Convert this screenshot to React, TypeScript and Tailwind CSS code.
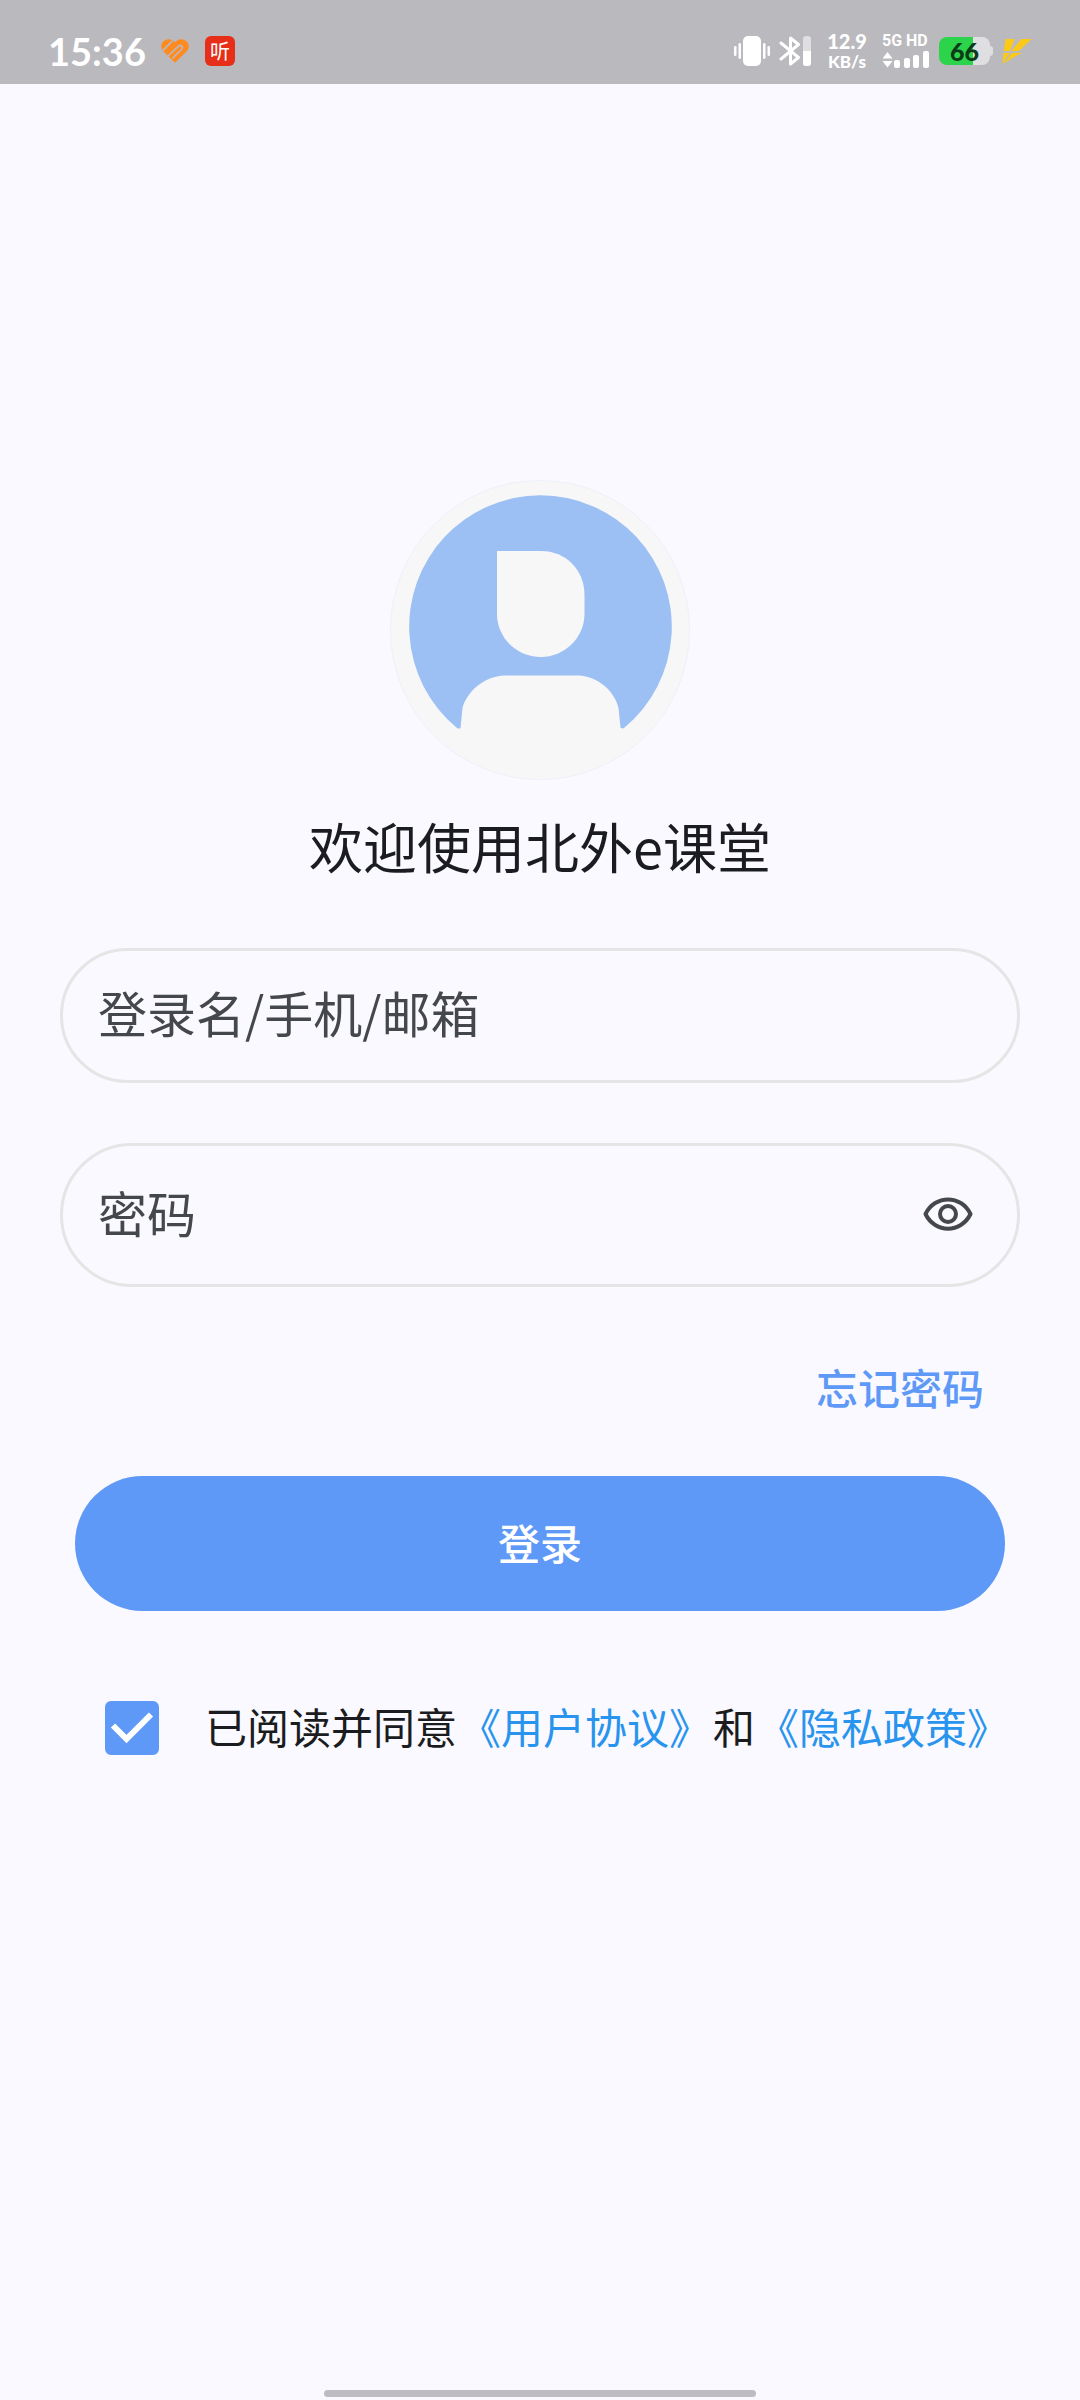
import { useState } from "react";

function HeartIcon() {
  return (
    <svg viewBox="0 0 84 72" className="h-6 w-7" aria-hidden="true">
      <defs>
        <clipPath id="heart">
          <path d="M42 71 L6 36 C-3 25 0 9 13 3 C24 -2 35 2 42 10 C49 2 60 -2 71 3 C84 9 87 25 78 36 Z" />
        </clipPath>
      </defs>
      <g clipPath="url(#heart)">
        <rect width="84" height="72" fill="#ff8a1f" />
        <path d="M0 40 L38 2" stroke="#bab9be" strokeWidth="5" />
        <path d="M18 54 L52 22 Q60 16 64 23 Q66 28 60 33 L34 58" stroke="#bab9be" strokeWidth="5" fill="none" />
      </g>
    </svg>
  );
}

function VibrateIcon() {
  return (
    <svg viewBox="0 0 36 30" className="h-[30px] w-9" fill="#fff" aria-hidden="true">
      <rect x="9" width="18" height="30" rx="5" />
      <rect y="10" width="2.5" height="10" rx="1.2" />
      <rect x="4.5" y="7" width="2.5" height="16" rx="1.2" />
      <rect x="29" y="7" width="2.5" height="16" rx="1.2" />
      <rect x="33.5" y="10" width="2.5" height="10" rx="1.2" />
    </svg>
  );
}

function BluetoothIcon() {
  return (
    <svg viewBox="0 0 33 30" className="h-[30px] w-[33px]" aria-hidden="true">
      <path d="M2 7 L19.5 21.5 L11.5 28 V2 L19.5 8.5 L2 23" fill="none" stroke="#fff" strokeWidth="3" strokeLinecap="round" strokeLinejoin="round" />
      <rect x="24" width="8" height="30" rx="3" fill="#dfdfe2" />
      <path d="M24 15 H32 V27 Q32 30 29 30 H27 Q24 30 24 27 Z" fill="#fff" />
    </svg>
  );
}

function SignalIcon() {
  return (
    <svg viewBox="0 0 47 17" className="h-[17px] w-[47px]" fill="#fff" aria-hidden="true">
      <path d="M5.5 1 L10.5 7.5 H0.5 Z M5.5 16.5 L0.5 10 H10.5 Z" />
      <rect x="12" y="9" width="6" height="8" rx="2" />
      <rect x="22" y="7" width="6" height="10" rx="2" />
      <rect x="31" y="4" width="6" height="13" rx="2" />
      <rect x="41" y="0" width="6" height="17" rx="2" />
    </svg>
  );
}

function BoltIcon() {
  return (
    <svg viewBox="0 0 90 75" className="h-[25px] w-[30px]" fill="#fbc916" aria-hidden="true">
      <path d="M11 0 H38 L24 36 H5 Z" />
      <path d="M58 0 H89 L50 36 H28 Z" />
      <path d="M4 42 H24 L12 58 L2 75 Z" />
      <path d="M30 42 H60 L36 54 L4 75 Z" />
    </svg>
  );
}

function StatusBar() {
  return (
    <header className="flex h-[84px] items-center justify-between bg-[#bab9be] px-12 pt-[18px] font-['Lato','Noto_Sans_CJK_SC',sans-serif] text-white">
      <div className="flex items-center">
        <span className="text-[38px] font-bold leading-none">15:36</span>
        <span className="ml-[15px]">
          <HeartIcon />
        </span>
        <span className="ml-4 flex h-[30px] w-[30px] items-center justify-center rounded-md bg-[#e62e19] text-[20px] leading-none">
          听
        </span>
      </div>
      <div className="flex items-center">
        <VibrateIcon />
        <span className="ml-[9px]">
          <BluetoothIcon />
        </span>
        <span className="ml-[13px] flex w-11 flex-col items-center font-black">
          <span className="text-[20px] leading-[22px]">12.9</span>
          <span className="text-[17px] leading-[20px]">KB/s</span>
        </span>
        <span className="ml-[13px] flex flex-col gap-[3px]">
          <span className="whitespace-nowrap font-['Roboto',sans-serif] text-[16px] font-bold leading-[14px]">5G HD</span>
          <SignalIcon />
        </span>
        <span className="ml-[10px] flex items-center">
          <span className="flex h-7 w-[51px] items-center justify-center rounded-lg bg-[linear-gradient(90deg,#2bd44a_66%,#dfdfe2_66%)] text-[25px] font-black leading-none text-[#0d3b17]">
            66
          </span>
          <span className="h-[10px] w-[3px] rounded-r-sm bg-[#dfdfe2]" />
        </span>
        <span className="ml-[9px]">
          <BoltIcon />
        </span>
      </div>
    </header>
  );
}

function Avatar() {
  return (
    <svg viewBox="0 0 300 300" className="h-[300px] w-[300px]" role="img" aria-label="头像">
      <circle cx="150" cy="150" r="149.5" fill="#f7f7f7" stroke="#edf1f9" />
      <path
        d="M67 248 A131.3 131.3 0 1 1 234 248 Q232 249 230.5 247.5 L228.5 228 C225 212 209 197 190 195.5 H113 C93 197 77 212 72.5 228 L70.5 248 Q69 249 67 248 Z"
        fill="#9cbff4"
      />
      <path d="M107 71 H151 C176 71 194.5 90 194.5 115 V134 C194.5 158 174 177 151 177 C127 177 107 158 107 134 Z" fill="#f7f7f7" />
    </svg>
  );
}

function EyeIcon() {
  return (
    <svg viewBox="0 0 50 34" className="h-[34px] w-[50px]" fill="none" stroke="#44474c" strokeWidth="4" aria-hidden="true">
      <path d="M2.5 17 C12 -2.5 38 -2.5 47.5 17 C38 36.5 12 36.5 2.5 17 Z" strokeLinejoin="round" />
      <circle cx="25" cy="17" r="8" />
    </svg>
  );
}

export default function App() {
  const [visible, setVisible] = useState(false);
  const [agreed, setAgreed] = useState(true);

  return (
    <div className="flex min-h-screen flex-col bg-[#faf9ff] font-['Noto_Sans_CJK_SC',sans-serif] text-[#1a1c20]">
      <StatusBar />
      <main className="flex flex-1 flex-col items-center px-[60px] pt-[396px]">
        <Avatar />
        <h1 className="mt-[26px] text-[54px] leading-[80px]">欢迎使用北外e课堂</h1>
        <form className="mt-[62px] flex w-full flex-col" onSubmit={(e) => e.preventDefault()}>
          <input
            type="text"
            aria-label="登录名/手机/邮箱"
            placeholder="登录名/手机/邮箱"
            className="h-[135px] w-full rounded-full border-[3px] border-[#e5e5e5] bg-transparent px-[35px] pb-2 text-[49px] outline-none placeholder:text-[#44474c]"
          />
          <div className="mt-[60px] flex h-36 w-full items-center rounded-full border-[3px] border-[#e5e5e5] pl-[35px] pr-11">
            <input
              type={visible ? "text" : "password"}
              aria-label="密码"
              placeholder="密码"
              className="h-full min-w-0 flex-1 bg-transparent pb-2 text-[49px] outline-none placeholder:text-[#44474c]"
            />
            <button type="button" aria-label="显示密码" className="pb-[3px]" onClick={() => setVisible(!visible)}>
              <EyeIcon />
            </button>
          </div>
          <a href="#forgot" className="mr-9 mt-[70px] self-end text-[42px] font-medium leading-[60px] text-[#5f99f7]">
            忘记密码
          </a>
          <button type="submit" className="mx-[15px] mt-[59px] h-[135px] rounded-full bg-[#5f99f7] pb-1 text-[42px] font-medium text-white">
            登录
          </button>
          <div className="mt-[87px] flex items-center pl-[45px]">
            <span className="relative flex h-[54px] w-[54px] shrink-0">
              <input
                id="agree"
                type="checkbox"
                checked={agreed}
                onChange={(e) => setAgreed(e.target.checked)}
                className="peer h-full w-full appearance-none rounded-md border-4 border-[#5f99f7] checked:bg-[#5f99f7]"
              />
              <svg viewBox="0 0 54 54" className="pointer-events-none invisible absolute inset-0 peer-checked:visible" aria-hidden="true">
                <path d="M8 24.5 L21.5 38 L46 13.5" fill="none" stroke="#fff" strokeWidth="6" />
              </svg>
            </span>
            <p className="ml-[46px] whitespace-nowrap pb-1 text-[42px] leading-[56px]">
              <label htmlFor="agree">已阅读并同意</label>
              <a href="#terms" className="ml-[2px] text-[#2894ee]">《用户协议》</a>
              <span className="mx-[2px]">和</span>
              <a href="#privacy" className="text-[#2894ee]">《隐私政策》</a>
            </p>
          </div>
        </form>
      </main>
      <footer className="flex justify-center pb-[3px]">
        <span className="h-[7px] w-2/5 rounded-full bg-[#bdbcc1]" />
      </footer>
    </div>
  );
}
